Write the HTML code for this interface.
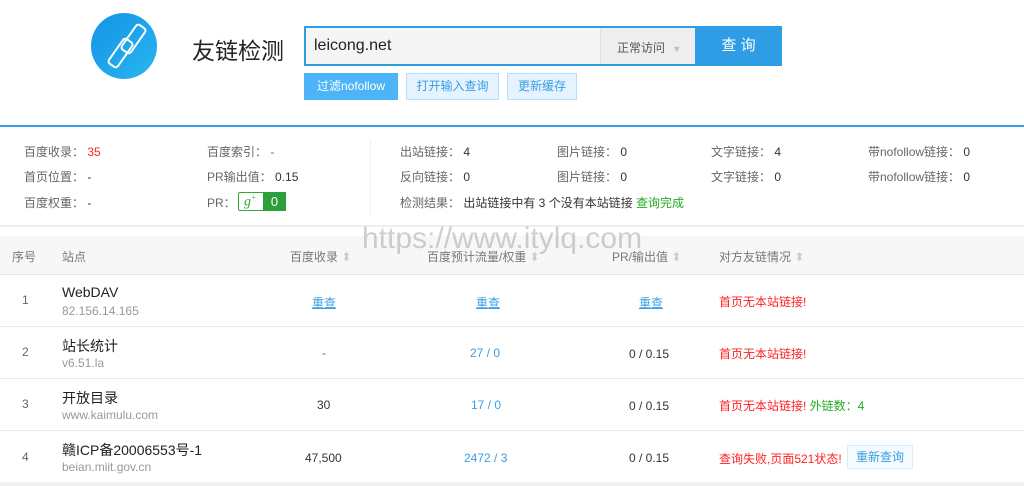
<!DOCTYPE html>
<html><head><meta charset="utf-8"><style>
*{margin:0;padding:0;box-sizing:border-box}
body{width:1024px;height:486px;overflow:hidden;background:#fff;font-family:"Liberation Sans","Noto Sans CJK SC",sans-serif;color:#333;position:relative;font-size:12px}
.a{position:absolute;white-space:nowrap}
.g{color:#666}
.r{color:#f22}
.bl{color:#3a9ee4}
.gr{color:#2a2}
.hd{color:#777}
</style></head><body>
<svg class="a" style="left:90px;top:11px" width="72" height="72" viewBox="0 0 72 72">
<defs><linearGradient id="lg" x1="0" y1="0" x2="1" y2="1"><stop offset="0" stop-color="#1493e6"/><stop offset="1" stop-color="#29b6f0"/></linearGradient></defs>
<circle cx="34" cy="35" r="33" fill="url(#lg)"/>
<g fill="none" stroke="#fff" stroke-width="2" stroke-linejoin="round">
<rect x="25" y="27" width="11" height="30" rx="3" transform="rotate(35 30.5 42)"/>
<rect x="38" y="13" width="11" height="30" rx="3" transform="rotate(35 43.5 28)"/>
</g></svg>
<div class="a" style="left:192px;top:32px;font-size:23px;color:#222">友链检测</div>
<div class="a" style="left:304px;top:26px;width:478px;height:40px;border:2px solid #2e9de6;background:#f5f5f5"></div>
<div class="a" style="left:314px;top:37px;font-size:16px;color:#222">leicong.net</div>
<div class="a" style="left:600px;top:28px;width:95px;height:36px;background:#eee;border-left:1px solid #e2e2e2"></div>
<div class="a" style="left:617px;top:39px;font-size:12px;color:#555">正常访问 <span style="color:#bbb;font-size:9px;margin-left:4px">▼</span></div>
<div class="a" style="left:695px;top:26px;width:87px;height:40px;background:#2e9de6;color:#fff;font-size:15px;text-align:center;line-height:40px">查 询</div>
<div class="a" style="left:304px;top:73px;width:94px;height:27px;background:#4db5f7;color:#fff;text-align:center;line-height:27px">过滤nofollow</div>
<div class="a" style="left:406px;top:73px;width:93px;height:27px;background:#e4f3fd;border:1px solid #b9e0f9;color:#3a9ee4;text-align:center;line-height:25px">打开输入查询</div>
<div class="a" style="left:507px;top:73px;width:70px;height:27px;background:#e4f3fd;border:1px solid #b9e0f9;color:#3a9ee4;text-align:center;line-height:25px">更新缓存</div>
<div class="a" style="left:0;top:125px;width:1024px;height:2px;background:#3aa0e6"></div>
<div class="a" style="left:370px;top:140px;width:1px;height:76px;background:#f0f0f0"></div>
<div class="a" style="left:24px;top:143px"><span class="g">百度收录：</span> <span class="r">35</span></div>
<div class="a" style="left:24px;top:168px"><span class="g">首页位置：</span> -</div>
<div class="a" style="left:24px;top:194px"><span class="g">百度权重：</span> -</div>
<div class="a" style="left:207px;top:143px"><span class="g">百度索引：</span> <span class="r">-</span></div>
<div class="a" style="left:207px;top:168px"><span class="g">PR输出值：</span> 0.15</div>
<div class="a" style="left:207px;top:194px"><span class="g">PR：</span></div>
<div class="a" style="left:238px;top:192px;width:48px;height:19px;border:1px solid #3a3;border-radius:2px;background:#fff"></div>
<div class="a" style="left:244px;top:193px;color:#3a3;font-family:'Liberation Serif',serif;font-style:italic;font-size:14px">g<sup style="font-size:8px">+</sup></div>
<div class="a" style="left:263px;top:192px;width:23px;height:19px;background:#2a9f3a;color:#fff;text-align:center;line-height:19px;font-size:13px">0</div>
<div class="a" style="left:400px;top:143px"><span class="g">出站链接：</span> 4</div>
<div class="a" style="left:400px;top:168px"><span class="g">反向链接：</span> 0</div>
<div class="a" style="left:400px;top:194px"><span class="g">检测结果：</span> 出站链接中有 3 个没有本站链接 <span class="gr">查询完成</span></div>
<div class="a" style="left:557px;top:143px"><span class="g">图片链接：</span> 0</div>
<div class="a" style="left:557px;top:168px"><span class="g">图片链接：</span> 0</div>
<div class="a" style="left:711px;top:143px"><span class="g">文字链接：</span> 4</div>
<div class="a" style="left:711px;top:168px"><span class="g">文字链接：</span> 0</div>
<div class="a" style="left:868px;top:143px"><span class="g">带nofollow链接：</span> 0</div>
<div class="a" style="left:868px;top:168px"><span class="g">带nofollow链接：</span> 0</div>
<div class="a" style="left:0;top:225px;width:1024px;height:2px;background:#eee"></div>
<div class="a" style="left:0;top:236px;width:1024px;height:39px;background:#f7f7f7;border-bottom:1px solid #e8e8e8"></div>
<div class="a hd" style="left:12px;top:248px">序号</div>
<div class="a hd" style="left:62px;top:248px">站点</div>
<div class="a hd" style="left:290px;top:248px">百度收录 <span style="color:#ccc">⬍</span></div>
<div class="a hd" style="left:427px;top:248px">百度预计流量/权重 <span style="color:#ccc">⬍</span></div>
<div class="a hd" style="left:612px;top:248px">PR/输出值 <span style="color:#ccc">⬍</span></div>
<div class="a hd" style="left:719px;top:248px">对方友链情况 <span style="color:#ccc">⬍</span></div>
<div class="a" style="left:362px;top:222px;font-size:30px;color:rgba(120,120,120,.35)">https://www.itylq.com</div>
<div class="a" style="left:0;top:326px;width:1024px;height:1px;background:#e8e8e8"></div>
<div class="a" style="left:0;top:378px;width:1024px;height:1px;background:#e8e8e8"></div>
<div class="a" style="left:0;top:430px;width:1024px;height:1px;background:#e8e8e8"></div>
<div class="a" style="left:0;top:482px;width:1024px;height:4px;background:#f0f0f0"></div>
<div class="a g" style="left:22px;top:293px">1</div>
<div class="a" style="left:62px;top:284px;font-size:14px;color:#222">WebDAV</div>
<div class="a" style="left:62px;top:304px;color:#999">82.156.14.165</div>
<div class="a bl" style="left:312px;top:294px;text-decoration:underline">重查</div>
<div class="a bl" style="left:476px;top:294px;text-decoration:underline">重查</div>
<div class="a bl" style="left:639px;top:294px;text-decoration:underline">重查</div>
<div class="a r" style="left:719px;top:293px">首页无本站链接!</div>
<div class="a g" style="left:22px;top:345px">2</div>
<div class="a" style="left:62px;top:336px;font-size:14px;color:#222">站长统计</div>
<div class="a" style="left:62px;top:356px;color:#999">v6.51.la</div>
<div class="a g" style="left:322px;top:346px">-</div>
<div class="a bl" style="left:470px;top:346px">27 / 0</div>
<div class="a" style="left:629px;top:347px">0 / 0.15</div>
<div class="a r" style="left:719px;top:345px">首页无本站链接!</div>
<div class="a g" style="left:22px;top:397px">3</div>
<div class="a" style="left:62px;top:388px;font-size:14px;color:#222">开放目录</div>
<div class="a" style="left:62px;top:408px;color:#999">www.kaimulu.com</div>
<div class="a" style="left:317px;top:398px">30</div>
<div class="a bl" style="left:471px;top:398px">17 / 0</div>
<div class="a" style="left:629px;top:399px">0 / 0.15</div>
<div class="a r" style="left:719px;top:397px">首页无本站链接! <span class="gr">外链数：4</span></div>
<div class="a g" style="left:22px;top:450px">4</div>
<div class="a" style="left:62px;top:440px;font-size:14px;color:#222">赣ICP备20006553号-1</div>
<div class="a" style="left:62px;top:460px;color:#999">beian.miit.gov.cn</div>
<div class="a" style="left:305px;top:451px">47,500</div>
<div class="a bl" style="left:464px;top:451px">2472 / 3</div>
<div class="a" style="left:629px;top:451px">0 / 0.15</div>
<div class="a r" style="left:719px;top:450px">查询失败,页面521状态!</div>
<div class="a bl" style="left:847px;top:445px;width:66px;height:24px;border:1px solid #d6ecfb;background:#f4fafe;text-align:center;line-height:22px">重新查询</div>
</body></html>
